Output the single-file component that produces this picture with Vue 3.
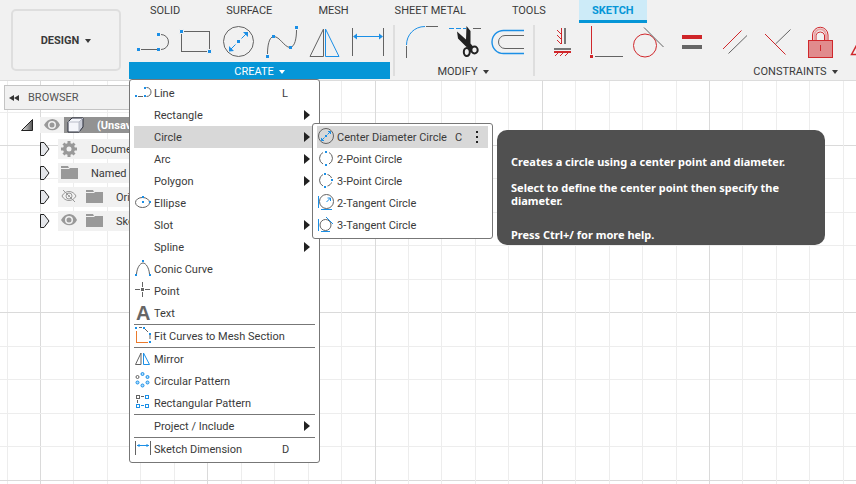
<script setup>
import { h } from 'vue'

const sq = (x, y, s = 3) => `M${x - s / 2} ${y - s / 2}h${s}v${s}h${-s}z`
const circ = (x, y, r, ry = r) => `M${x - r} ${y}a${r} ${ry} 0 1 0 ${2 * r} 0a${r} ${ry} 0 1 0 ${-2 * r} 0z`

// Each icon is a list of [ink, path] strokes or fills.
const icons = {
  line: [
    ['gray crisp', 'M9 25.5h16'],
    ['gray', 'M29 10.5a7.5 7.5 0 0 1 0 15'],
    ['blue-fill crisp', sq(6.5, 25.5) + sq(26.5, 10.5) + sq(26.5, 25.5)],
  ],
  rectangle: [
    ['gray crisp', 'M6.5 7.5h28v20h-28z'],
    ['blue-fill-cut', sq(6.5, 7.5, 4) + sq(34.5, 27.5, 4)],
  ],
  circle: [
    ['gray', circ(20.5, 17.5, 15)],
    ['blue', 'M12 26l5.5-5.5M23.5 14.5L29 9'],
    ['blue-fill', 'M11 27.500v-5.500l5 5zM30 8v5l-5-5z' + sq(20.5, 17.5)],
  ],
  spline: [
    ['gray', 'M6.500 30C6.500 22 8 13 12.500 12.500C19 12.500 23 23 29 23.500C34 23 35.500 14 35.500 6'],
    ['blue-fill crisp', sq(6.5, 32.5) + sq(12.5, 12.5) + sq(29.5, 23.5) + sq(35.5, 3.5)],
  ],
  mirror: [
    ['gray', 'M6 32.500L19.500 5v27.500z'],
    ['blue', 'M35 32.500L21.500 5v27.500z'],
  ],
  dimension: [
    ['gray crisp', 'M5.500 4v28M36.500 4v28'],
    ['blue crisp', 'M8 12.500h26'],
    ['blue-fill', 'M6 12.500l4-3v6zM36 12.500l-4-3v6z'],
  ],
  fillet: [
    ['blue', 'M5.500 21C5.500 11 13 2.500 24 2.500'],
    ['gray crisp', 'M5.500 22v12M25 2.500h12'],
  ],
  trim: [
    ['blue crisp dash', 'M5 4.500h17'],
    ['gray crisp', 'M29 4.500h8'],
    ['dark-fill', 'M13 7.500L22 15.500L22.500 2l4 5v12.500l3 3.500l-3 3.500l-5-4.500L14 14.500z'],
    ['dark-thick', circ(22.8, 28, 3, 4) + circ(30.5, 26, 3.2, 3.4)],
  ],
  offset: [
    ['blue-bold', 'M37 6.500H16.500a11.500 11.500 0 0 0 0 23H37'],
    ['gray', 'M37 11.500H18a6.500 6.500 0 0 0 0 13H37'],
  ],
  fixAxis: [
    ['red-bold crisp', 'M20.500 4v16M13 28h17'],
    ['red', 'M20 10l-4-4M20 15l-4-4M20 20l-4-4M18 28l-4 4M23 28l-4 4M28 28l-4 4'],
    ['gray-bold crisp', 'M24 4v16M13 24.500h17'],
  ],
  perpendicularPoint: [
    ['red-bold crisp', 'M7.500 2v28'],
    ['gray crisp', 'M11 32.500h28'],
    ['red-fill crisp', sq(7.5, 32.5)],
  ],
  tangent: [
    ['red', circ(18, 21.5, 11.5)],
    ['gray', 'M17 3.500l19.500 19.500'],
  ],
  equal: [
    ['red-fill', 'M12 11h20v4H12z'],
    ['gray-fill', 'M12 21h20v4H12z'],
  ],
  parallel: [
    ['red', 'M10 25L28.500 6.500'],
    ['gray', 'M15.500 29.500L34 11.500'],
  ],
  perpendicular: [
    ['red', 'M9 10l20.500 20.500'],
    ['gray', 'M19.500 20L34.500 5.500'],
  ],
  lock: [
    ['red-tint crisp', 'M9.500 16.500h24v17h-24z'],
    ['red', 'M13.500 16V11a7.500 7.500 0 0 1 15.500 0v5M17 16V11a4.500 4.500 0 0 1 8.500 0v5M21.500 21v6'],
    ['pink', 'M15.500 16V11a5.500 5.500 0 0 1 11.500 0v5'],
  ],
  midpoint: [['red-bold', 'M9.500 30.500L23 6l13.500 24.500z']],
  mLine: [
    ['gray', 'M4 14.500h5M12.500 5.500c6 0 6 9 0 9'],
    ['blue-fill crisp', sq(2, 14, 2) + sq(11, 6, 2) + sq(11, 14, 2)],
  ],
  mEllipse: [
    ['gray', circ(8.5, 10.5, 7, 5)],
    ['blue-fill crisp', sq(9, 10, 2) + sq(16, 10, 2) + sq(9, 5, 2)],
  ],
  mConic: [
    ['gray', 'M2.500 16C3 10 6 5 9 5s6 5 6.500 11'],
    ['blue-fill crisp', sq(2, 17, 2) + sq(9, 3, 2) + sq(16, 17, 2)],
  ],
  mPoint: [
    ['gray crisp', 'M1 9.500h5M11 9.500h5M8.500 2v5M8.500 12v5'],
    ['gray-fill crisp', sq(8.5, 9.5)],
  ],
  mFit: [
    ['orange crisp', 'M2.500 6v11h11'],
    ['gray', 'M5 2.500h3M11 4l3 3M16 10v4'],
    ['blue-fill crisp', sq(2, 3, 2) + sq(10, 3, 2) + sq(16, 9, 2) + sq(16, 17, 2)],
  ],
  mMirror: [
    ['gray', 'M1.500 16.500L7 5v11.500z'],
    ['blue', 'M15.500 16.500L9.500 5v11.500z'],
  ],
  mCircular: [
    ['gray', circ(3.5, 7, 1.5)],
    ['blue-tint', circ(8.5, 4, 1.5) + circ(13.5, 7, 1.5) + circ(3.5, 12.5, 1.5) + circ(13.5, 12.5, 1.5) + circ(8.5, 15.5, 1.5)],
  ],
  mGrid: [
    ['gray crisp', sq(3.5, 5, 3) + 'M7 4.500h3M3.500 8v3'],
    ['blue crisp', sq(13, 5, 3) + sq(3.5, 14, 3) + sq(13, 14, 3) + 'M7 13.500h3'],
  ],
  mDimension: [
    ['gray crisp', 'M1.500 3v14M16.500 3v14'],
    ['blue', 'M3 7.500h12M5 6v3M13 6v3'],
  ],
  cDiameter: [
    ['gray', circ(9, 10, 7.5)],
    ['blue', 'M4.500 14.500l3-3M10.500 8.500l3-3M4.500 12v2.500h2.500M11 5.500h2.500V8'],
    ['blue-fill crisp', sq(9, 10, 2)],
  ],
  cTwoPoint: [
    ['gray', 'M6 4.500a6.500 6.500 0 0 0 0 11.500M12 4.500a6.500 6.500 0 0 1 0 11.500'],
    ['blue-fill crisp', sq(9, 4, 2) + sq(9, 17, 2)],
  ],
  cThreePoint: [
    ['gray', 'M6 4.500a6.500 6.500 0 0 0 0 11.500M10.500 4.500c2 .5 3.500 2 4 3.500M10.500 16c2-.5 3.500-2 4-3.500'],
    ['blue-fill crisp', sq(8, 4, 2) + sq(15, 10, 2) + sq(8, 17, 2)],
  ],
  cTwoTangent: [
    ['gray', circ(9.5, 9.5, 7)],
    ['blue', 'M9.500 10l4-4M10.500 6h3v3'],
    ['blue crisp', 'M1.500 4v12M4 17.500h11'],
  ],
  cThreeTangent: [
    ['gray', circ(8.5, 11, 5.5)],
    ['blue', 'M9 3l7 7'],
    ['blue crisp', 'M1.500 5v12M4 17.500h9'],
  ],
  eye: [
    ['mid-fill eo', 'M0 7C4-1 13-1 16 7C13 14 4 14 0 7z' + circ(8, 7, 4)],
    ['mid-fill', circ(8, 7, 2.5)],
  ],
  eyeOff: [
    ['mid', 'M1 7C4 1 12 1 15 7C12 13 4 13 1 7z' + circ(8, 7, 3) + 'M2 1l12 12'],
    ['mid-fill', circ(8, 7, 1)],
  ],
  folder: [['mid-fill', 'M0 1h7l1 2H0zM0 4h8l1-1h8v11H0z']],
  gear: [
    ['mid-fill eo', circ(8, 8, 6) + circ(8, 8, 2.5)],
    ['mid-thick', 'M8 0v3M8 13v3M0 8h3M13 8h3M2.500 2.500l2 2M11.500 11.500l2 2M2.500 13.500l2-2M11.500 4.500l2-2'],
  ],
  cube: [
    ['shade', 'M12 5l4-4v9l-4 5z'],
    ['paper', 'M1 5l4-4h11l-4 4v10H1z'],
    ['navy', 'M1 5l4-4h11v9l-4 5H1z'],
    ['faint', 'M1 5h11v10M12 5l4-4'],
  ],
}

const Icon = (props) =>
  h(
    'svg',
    { width: props.w, height: props.h, viewBox: `0 0 ${props.w} ${props.h}`, 'aria-hidden': 'true', class: 'icon' },
    icons[props.name].map(([ink, d]) => h('path', { class: ink.split(' ').map((c) => 'ink-' + c), d }))
  )
Icon.props = ['name', 'w', 'h']

const tabs = ['SOLID', 'SURFACE', 'MESH', 'SHEET METAL', 'TOOLS', 'SKETCH']
const groups = [
  { id: 'create', label: 'CREATE', tools: ['line', 'rectangle', 'circle', 'spline', 'mirror', 'dimension'] },
  { id: 'modify', label: 'MODIFY', tools: ['fillet', 'trim', 'offset'] },
  {
    id: 'constraints',
    label: 'CONSTRAINTS',
    tools: ['fixAxis', 'perpendicularPoint', 'tangent', 'equal', 'parallel', 'perpendicular', 'lock', 'midpoint'],
  },
]

const sections = [
  [
    { label: 'Line', icon: 'mLine', key: 'L' },
    { label: 'Rectangle', more: true },
    {
      label: 'Circle',
      more: true,
      open: [
        { label: 'Center Diameter Circle', icon: 'cDiameter', key: 'C', active: true },
        { label: '2-Point Circle', icon: 'cTwoPoint' },
        { label: '3-Point Circle', icon: 'cThreePoint' },
        { label: '2-Tangent Circle', icon: 'cTwoTangent' },
        { label: '3-Tangent Circle', icon: 'cThreeTangent' },
      ],
    },
    { label: 'Arc', more: true },
    { label: 'Polygon', more: true },
    { label: 'Ellipse', icon: 'mEllipse' },
    { label: 'Slot', more: true },
    { label: 'Spline', more: true },
    { label: 'Conic Curve', icon: 'mConic' },
    { label: 'Point', icon: 'mPoint' },
    { label: 'Text', glyph: 'A' },
  ],
  [{ label: 'Fit Curves to Mesh Section', icon: 'mFit' }],
  [
    { label: 'Mirror', icon: 'mMirror' },
    { label: 'Circular Pattern', icon: 'mCircular' },
    { label: 'Rectangular Pattern', icon: 'mGrid' },
  ],
  [{ label: 'Project / Include', more: true }],
  [{ label: 'Sketch Dimension', icon: 'mDimension', key: 'D' }],
]

const nodes = [
  { label: 'Document Settings', icons: ['gear'] },
  { label: 'Named Views', icons: ['folder'] },
  { label: 'Origin', icons: ['eyeOff', 'folder'] },
  { label: 'Sketches', icons: ['eye', 'folder'] },
]

// Sketch grid: every fifth line is heavier.
const step = 33.45
const gridLines = Array.from({ length: 90 }, (_, i) => ({
  x: Math.round(40 + (i - 1) * step),
  y: Math.round(64 + (i - 1) * step),
  major: (i - 1) % 5 === 0,
}))
</script>

<template>
  <div class="app">
    <header class="toolbar">
      <button class="workspace">DESIGN <i class="caret"></i></button>
      <div class="ribbon">
        <nav class="tabs">
          <button v-for="t in tabs" :key="t" class="tab" :class="{ current: t === 'SKETCH' }">{{ t }}</button>
        </nav>
        <div class="groups">
          <section v-for="g in groups" :key="g.id" class="group" :class="g.id">
            <div class="tools">
              <button v-for="t in g.tools" :key="t" class="tool" :aria-label="t"><Icon :name="t" :w="43" :h="38" /></button>
            </div>
            <button class="group-label">{{ g.label }} <i class="caret"></i></button>

            <ul v-if="g.id === 'create'" class="menu">
              <template v-for="(items, s) in sections" :key="s">
                <li v-if="s" class="rule"></li>
                <li v-for="m in items" :key="m.label" class="entry">
                  <button class="item" :class="{ active: m.open }">
                    <span class="slot">
                      <Icon v-if="m.icon" :name="m.icon" :w="20" :h="22" />
                      <b v-if="m.glyph" class="glyph" aria-hidden="true">{{ m.glyph }}</b>
                    </span>
                    <span class="name">{{ m.label }}</span>
                    <kbd v-if="m.key">{{ m.key }}</kbd>
                    <i v-if="m.more" class="arrow"></i>
                  </button>
                  <ul v-if="m.open" class="menu submenu">
                    <li v-for="c in m.open" :key="c.label">
                      <button class="item" :class="{ active: c.active }">
                        <span class="slot"><Icon :name="c.icon" :w="20" :h="22" /></span>
                        <span class="name">{{ c.label }}</span>
                        <kbd v-if="c.key">{{ c.key }}</kbd>
                        <span v-if="c.active" class="dots"><i></i><i></i><i></i></span>
                      </button>
                    </li>
                  </ul>
                </li>
              </template>
            </ul>
          </section>
        </div>
      </div>
    </header>

    <main class="canvas">
      <svg class="grid" aria-hidden="true">
        <template v-for="(l, i) in gridLines" :key="i">
          <rect :x="l.x" y="0" width="1" height="100%" :class="{ major: l.major }" />
          <rect x="0" :y="l.y" width="100%" height="1" :class="{ major: l.major }" />
        </template>
      </svg>

      <aside class="browser">
        <h2><span class="rewind"><i></i><i></i></span>BROWSER</h2>
        <div class="root">
          <svg class="open-mark" width="12" height="12" aria-hidden="true">
            <defs>
              <linearGradient id="corner"><stop offset="0" class="stop-a" /><stop offset="1" class="stop-b" /></linearGradient>
            </defs>
            <path d="M.5 11.500L11.500.5v11z" fill="url(#corner)" stroke="#222" />
          </svg>
          <span class="root-eye"><Icon name="eye" :w="16" :h="14" /></span>
          <span class="root-name"><Icon name="cube" :w="17" :h="16" /><b>(Unsaved)</b></span>
        </div>
        <ul class="tree">
          <li v-for="n in nodes" :key="n.label">
            <svg class="closed-mark" width="10" height="14" aria-hidden="true">
              <path d="M.5.5H4L9 7l-5 6.500H.5z" fill="#e4e6ea" stroke="#222" />
            </svg>
            <span class="node">
              <Icon v-for="k in n.icons" :key="k" :name="k" :w="17" :h="16" />
              <span class="node-name">{{ n.label }}</span>
            </span>
          </li>
        </ul>
      </aside>

      <div class="tooltip" role="tooltip">
        <p>Creates a circle using a center point and diameter.</p>
        <p>Select to define the center point then specify the diameter.</p>
        <p class="help">Press Ctrl+/ for more help.</p>
      </div>
    </main>
  </div>
</template>

<style>
html,
body {
  margin: 0;
  overflow: hidden;
}
.icon { display: block; flex: none; overflow: visible; }
.icon path { fill: none; stroke-width: 1; }
.icon .ink-crisp { shape-rendering: crispEdges; }
.icon .ink-gray { stroke: #636363; }
.icon .ink-gray-bold { stroke: #777; stroke-width: 2; }
.icon .ink-gray-fill { fill: #666; }
.icon .ink-blue { stroke: #1b8fe6; }
.icon .ink-blue-bold { stroke: #1b8fe6; stroke-width: 1.4; }
.icon .ink-blue-fill { fill: #1b8fe6; }
.icon .ink-blue-fill-cut { fill: #1b8fe6; stroke: #f1f1f1; }
.icon .ink-blue-tint { fill: #a9dcff; stroke: #1b8fe6; }
.icon .ink-dash { stroke-dasharray: 5 2; }
.icon .ink-red { stroke: #d0282c; }
.icon .ink-red-bold { stroke: #d0282c; stroke-width: 1.5; }
.icon .ink-red-fill { fill: #cf2529; }
.icon .ink-red-tint { fill: #e18b8d; stroke: #d0282c; }
.icon .ink-pink { stroke: #e9a5a6; stroke-width: 2; }
.icon .ink-orange { stroke: #ea7a2c; }
.icon .ink-dark-fill { fill: #222; }
.icon .ink-dark-thick { stroke: #222; stroke-width: 2; }
.icon .ink-mid { stroke: #999; }
.icon .ink-mid-fill { fill: #999; }
.icon .ink-mid-thick { stroke: #999; stroke-width: 3; }
.icon .ink-eo { fill-rule: evenodd; }
.icon .ink-paper { fill: #f4f5fa; }
.icon .ink-shade { fill: #c9ccd6; }
.icon .ink-navy { stroke: #2b2f3c; }
.icon .ink-faint { stroke: #b9bcc8; }
</style>

<style scoped>
.app {
  display: flex;
  flex-direction: column;
  height: 100vh;
  overflow: hidden;
  font: 11px/14px Roboto, "Liberation Sans", sans-serif;
  color: #3a3a3a;
}
button {
  box-sizing: border-box;
  margin: 0;
  padding: 0;
  border: 0;
  background: none;
  font: inherit;
  color: inherit;
}
ul { margin: 0; padding: 0; list-style: none; }
.caret {
  border: 3px solid transparent;
  border-top: 4px solid currentColor;
  border-bottom: 0;
}
.toolbar {
  position: relative;
  z-index: 1;
  display: flex;
  flex: none;
  gap: 8px;
  height: 80px;
  padding-left: 11px;
  background: #f1f1f1;
  border-bottom: 1px solid #dcdcdc;
}
.workspace {
  display: flex;
  flex: none;
  align-items: center;
  justify-content: center;
  gap: 6px;
  width: 110px;
  height: 62px;
  margin-top: 9px;
  padding-top: 2px;
  border: 2px solid #dedede;
  border-radius: 5px;
  font-weight: 700;
}
.ribbon { flex: 1; min-width: 0; }
.tabs { display: flex; gap: 20px; height: 23px; padding-left: 8px; }
.tab { padding: 0 13px 1px; white-space: nowrap; }
.tab.current {
  padding: 2px 13px 0;
  background: #cdebf8;
  border-bottom: 3px solid #0696d7;
  color: #0696d7;
  font-weight: 700;
}
.groups { display: flex; }
.group { position: relative; flex: none; box-sizing: border-box; }
.tools { display: flex; height: 38px; padding: 1px 0 0 3px; }
.tool { width: 43px; }
.group-label {
  display: flex;
  align-items: center;
  justify-content: center;
  gap: 5px;
  width: 100%;
  height: 17px;
  padding-top: 2px;
}
.create .group-label { background: #0696d7; color: #fff; }
.modify { margin-left: 3px; }
.modify .tools, .constraints .tools { padding-left: 8px; }
.modify .tools { padding-right: 3px; }
.modify::before, .constraints::before {
  content: "";
  position: absolute;
  top: 2px;
  bottom: 3px;
  left: 0;
  width: 2px;
  background: #dedede;
}
.constraints { min-width: 525px; }

.menu {
  position: absolute;
  top: 100%;
  left: 0;
  width: 181px;
  padding: 2px 4px;
  background: #fff;
  border: 1px solid #777;
  border-radius: 3px;
}
.entry { position: relative; }
.rule { height: 1px; background: #777; }
.item {
  display: flex;
  align-items: center;
  width: 100%;
  height: 22px;
  text-align: left;
  white-space: nowrap;
}
.item.active { background: #d8d8d8; }
.slot { flex: none; width: 20px; height: 22px; }
.glyph {
  display: block;
  font-family: "Liberation Sans", Arial, sans-serif;
  font-size: 20px;
  line-height: 22px;
  text-indent: 2px;
  color: #666;
}
.name { flex: 1; padding-top: 2px; }
kbd { width: 8px; margin-right: 25px; padding-top: 2px; font: inherit; }
.arrow {
  margin-right: 5px;
  border: 5px solid transparent;
  border-left: 6px solid #222;
  border-right: 0;
}
.submenu { top: -3px; left: 178px; width: 171px; }
.submenu kbd { margin-right: 13px; }
.dots { display: grid; gap: 3px; margin-right: 10px; }
.dots i { width: 2px; height: 2px; background: #222; }

.canvas { position: relative; flex: 1; min-height: 0; background: #fff; }
.grid { position: absolute; inset: 0; width: 100%; height: 100%; }
.grid rect { fill: #ededed; }
.grid rect.major { fill: #dadada; }

.browser { position: relative; width: 126px; padding: 4px 0 0 4px; overflow: hidden; }
.browser h2 {
  display: flex;
  align-items: center;
  gap: 9px;
  height: 23px;
  margin: 0;
  padding-left: 4px;
  background: #f1f1f1;
  border: 1px solid #c4c4c4;
  font-size: 11px;
  font-weight: 400;
  color: #555;
}
.rewind { display: flex; }
.rewind i {
  border: 3px solid transparent;
  border-right: 5px solid #333;
  border-left: 0;
}
.root { display: flex; align-items: center; height: 16px; margin: 7px 0 0 17px; }
.open-mark { flex: none; }
.root-eye {
  display: flex;
  flex: none;
  align-items: center;
  width: 20px;
  height: 16px;
  margin-left: 7px;
  padding-left: 4px;
  background: #f1f1f1;
}
.root-name {
  display: flex;
  flex: 1;
  gap: 13px;
  min-width: 0;
  height: 16px;
  padding-left: 3px;
  overflow: hidden;
  background: #929292;
  color: #fff;
  line-height: 18px;
}
.root-name b { min-width: 0; overflow: hidden; }
.tree { display: grid; gap: 4px; margin: 6px 0 0 36px; }
.tree li { display: flex; align-items: center; min-width: 0; }
.closed-mark { flex: none; margin-right: 8px; }
.node {
  display: flex;
  flex: 1;
  align-items: center;
  gap: 8px;
  min-width: 0;
  height: 20px;
  padding-left: 3px;
  background: #f1f1f1;
  white-space: nowrap;
}
.node-name { min-width: 0; margin-left: 5px; padding-top: 2px; overflow: hidden; }
.stop-a { stop-color: #eee; }
.stop-b { stop-color: #555; }

.tooltip {
  position: absolute;
  top: 49px;
  left: 497px;
  box-sizing: border-box;
  width: 328px;
  padding: 25px 14px 4px;
  border-radius: 10px;
  background: #505050;
  color: #fff;
  font: 700 11px/13px "Noto Sans", "Open Sans", sans-serif;
}
.tooltip p { margin: 0 0 13px; }
.tooltip .help { margin: 21px 0 0; }
</style>
